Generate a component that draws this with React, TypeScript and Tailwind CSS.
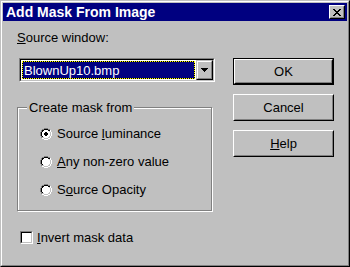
import React from 'react';

const palette: Record<string, string> = {
  K: '#000000',
  G: '#808080',
  W: '#ffffff',
  D: '#c0c0c0',
  w: '#ffffff',
};

const Pixels: React.FC<{ rows: string[]; className?: string }> = ({ rows, className }) => {
  const w = rows[0].length;
  const h = rows.length;
  return (
    <svg width={w} height={h} viewBox={`0 0 ${w} ${h}`} shapeRendering="crispEdges" className={className}>
      {rows.map((row, y) =>
        row.split('').map((c, x) =>
          palette[c] ? <rect key={`${x}-${y}`} x={x} y={y} width={1} height={1} fill={palette[c]} /> : null
        )
      )}
    </svg>
  );
};

const closeGlyph = [
  'KK    KK',
  ' KK  KK ',
  '  KKKK  ',
  '   KK   ',
  '  KKKK  ',
  ' KK  KK ',
  'KK    KK',
];

const arrowGlyph = ['KKKKKKK', ' KKKKK ', '  KKK  ', '   K   '];

const radioOn = [
  '    GGGG    ',
  '  GGKKKKGG  ',
  ' GKKwwwwKKW ',
  ' GKwwwwwwDW ',
  'GKwwwKKwwwDW',
  'GKwwKKKKwwDW',
  'GKwwKKKKwwDW',
  'GKwwwKKwwwDW',
  ' GKwwwwwwDW ',
  ' GDDwwwwDDW ',
  '  WWDDDDWW  ',
  '    WWWW    ',
];

const radioOff = radioOn.map((r, i) => (i >= 4 && i <= 7 ? r.slice(0, 4) + 'wwww' + r.slice(8) : r));

const Radio: React.FC<{ checked?: boolean; children: React.ReactNode }> = ({ checked, children }) => (
  <div className="flex items-center h-[15px] gap-[5px]">
    <Pixels rows={checked ? radioOn : radioOff} />
    <span>{children}</span>
  </div>
);

const Button: React.FC<{ isDefault?: boolean; children: React.ReactNode }> = ({ isDefault, children }) => {
  const inner = (
    <div className="h-full border border-t-white border-l-white border-r-black border-b-black">
      <div className="h-full border border-t-[#c0c0c0] border-l-[#c0c0c0] border-r-[#808080] border-b-[#808080] flex items-center justify-center">
        {children}
      </div>
    </div>
  );
  return (
    <div className={`w-[101px] h-[27px] ${isDefault ? 'border border-black' : ''}`}>{inner}</div>
  );
};

export default function App() {
  return (
    <div className="w-[350px] h-[267px] bg-[#c0c0c0] border border-t-[#c0c0c0] border-l-[#c0c0c0] border-r-black border-b-black font-['Liberation_Sans',Arial,sans-serif] text-[13px] leading-[15px] text-black select-none">
      <div className="h-full border border-t-white border-l-white border-r-[#808080] border-b-[#808080] p-px flex flex-col">
        {/* title bar */}
        <div className="h-[18px] bg-[#000080] flex items-center pl-[3px]">
          <span className="flex-1 text-white font-bold text-[14px] leading-[18px]">Add Mask From Image</span>
          <div className="w-[16px] h-[14px] mr-[2px] border border-t-white border-l-white border-r-black border-b-black bg-[#c0c0c0]">
            <div className="h-full border border-t-[#c0c0c0] border-l-[#c0c0c0] border-r-[#808080] border-b-[#808080] flex items-center justify-center">
              <Pixels rows={closeGlyph} />
            </div>
          </div>
        </div>

        <div className="flex-1 flex pl-[14px]">
          {/* left column */}
          <div className="w-[198px] flex flex-col">
            <div className="mt-[9px]">
              <u>S</u>ource window:
            </div>
            <div className="mt-[13px] ml-[2px] w-[196px] h-[24px] border border-t-[#808080] border-l-[#808080] border-r-white border-b-white">
              <div className="h-full border border-t-black border-l-black border-r-[#c0c0c0] border-b-[#c0c0c0] bg-white flex">
                <div className="flex-1 m-px bg-black border border-dotted border-[#ffff00]">
                  <div className="h-full bg-[#000080] text-white pl-[1px] flex items-center">BlownUp10.bmp</div>
                </div>
                <div className="w-[17px] h-full bg-[#c0c0c0] border border-t-[#c0c0c0] border-l-[#c0c0c0] border-r-black border-b-black">
                  <div className="h-full border border-t-white border-l-white border-r-[#808080] border-b-[#808080] flex items-center justify-center">
                    <Pixels rows={arrowGlyph} />
                  </div>
                </div>
              </div>
            </div>

            {/* group box */}
            <div className="relative mt-[25px] w-[195px] h-[104px] border border-[#808080] shadow-[inset_1px_1px_0_#fff,1px_1px_0_#fff]">
              <span className="absolute -top-[8px] left-[9px] px-[2px] bg-[#c0c0c0]">Create mask from</span>
              <div className="flex flex-col gap-[13px] pt-[18px] pl-[22px]">
                <Radio checked>
                  Source <u>l</u>uminance
                </Radio>
                <Radio>
                  <u>A</u>ny non-zero value
                </Radio>
                <Radio>
                  S<u>o</u>urce Opacity
                </Radio>
              </div>
            </div>

            <div className="mt-[19px] pl-[3px] flex items-center h-[15px] gap-[4px]">
              <div className="w-[13px] h-[13px] border border-t-[#808080] border-l-[#808080] border-r-white border-b-white">
                <div className="h-full border border-t-black border-l-black border-r-[#c0c0c0] border-b-[#c0c0c0] bg-white" />
              </div>
              <span>
                <u>I</u>nvert mask data
              </span>
            </div>
          </div>

          {/* buttons */}
          <div className="ml-[18px] pt-[37px] flex flex-col gap-[9px]">
            <Button isDefault>OK</Button>
            <Button>Cancel</Button>
            <Button>
              <span>
                <u>H</u>elp
              </span>
            </Button>
          </div>
        </div>
      </div>
    </div>
  );
}
